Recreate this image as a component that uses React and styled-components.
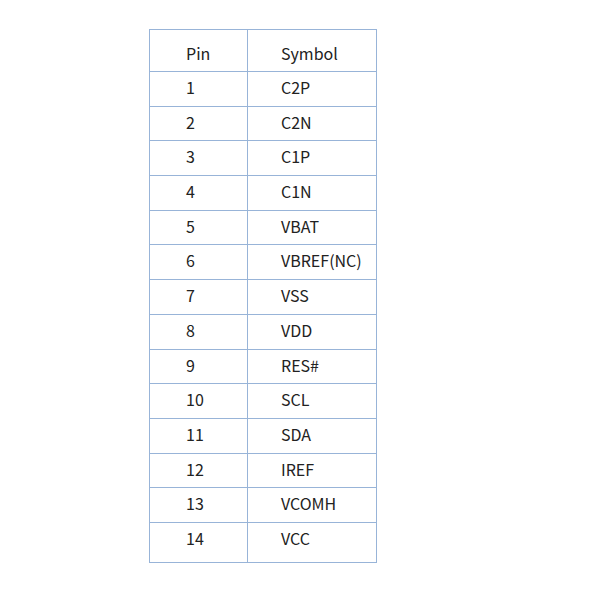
import styled, { createGlobalStyle } from 'styled-components'

const GlobalStyle = createGlobalStyle`
    body {
        margin: 0;
        background: #ffffff;
        font-family: "Noto Sans CJK SC", "Noto Sans", sans-serif;
    }
`

const StyledPage = styled.div`
    width: 600px;
    height: 600px;
    padding: 29px 0 0 149px;
    box-sizing: border-box;
`

const StyledTable = styled.table`
    border-collapse: collapse;
    width: 228px;
    table-layout: fixed;
    color: #222222;
    font-size: 16px;
`

const StyledRow = styled.tr`
    height: ${props => props.height}px;
`

const StyledCell = styled.td`
    border: 1px solid #98b4d8;
    padding: ${props => props.head ? '15px' : '7px'} 0 0 ${props => props.indent}px;
    vertical-align: top;
    line-height: 1;
    white-space: nowrap;
`

const pins = [
    'C2P', 'C2N', 'C1P', 'C1N', 'VBAT', 'VBREF(NC)', 'VSS',
    'VDD', 'RES#', 'SCL', 'SDA', 'IREF', 'VCOMH', 'VCC',
]

export default function App() {
    return (
        <>
            <GlobalStyle />
            <StyledPage>
                <StyledTable>
                    <colgroup>
                        <col style={{ width: '98px' }} />
                        <col />
                    </colgroup>
                    <tbody>
                        <StyledRow height={42}>
                            <StyledCell head indent={36}>Pin</StyledCell>
                            <StyledCell head indent={33}>Symbol</StyledCell>
                        </StyledRow>
                        {pins.map((symbol, i) => (
                            <StyledRow key={symbol} height={i === pins.length - 1 ? 40 : 34.7}>
                                <StyledCell indent={36}>{i + 1}</StyledCell>
                                <StyledCell indent={33}>{symbol}</StyledCell>
                            </StyledRow>
                        ))}
                    </tbody>
                </StyledTable>
            </StyledPage>
        </>
    )
}
